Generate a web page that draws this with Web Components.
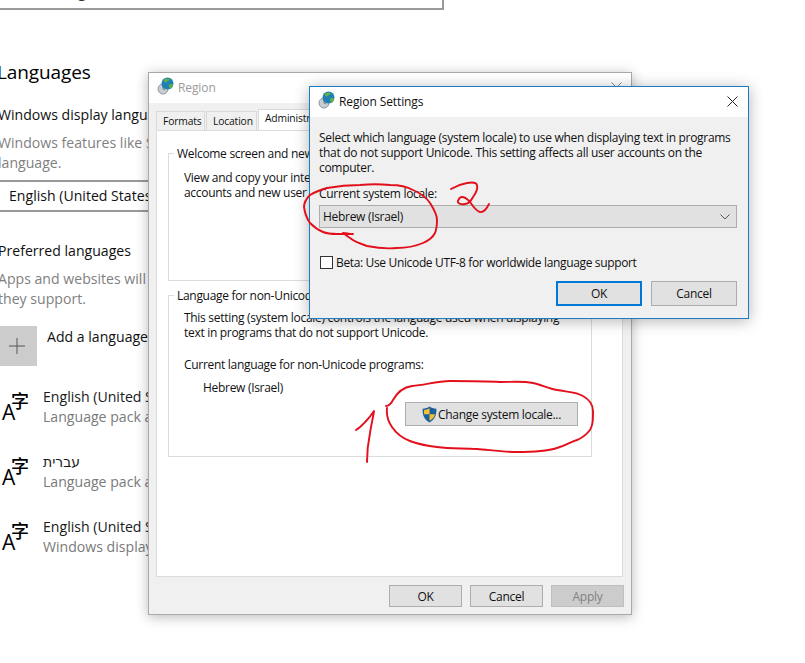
<!DOCTYPE html>
<html><head><meta charset="utf-8">
<style>
html,body{margin:0;padding:0;background:#fff}
body{width:805px;height:663px;overflow:hidden;position:relative;font-family:"Open Sans","Noto Sans",sans-serif;color:#000}
</style></head><body>
<settings-page></settings-page>
<region-window></region-window>
<locale-dialog></locale-dialog>
<red-scribbles></red-scribbles>
<script>
const FONT='"Open Sans","Noto Sans",sans-serif';
const GLOBE=`<svg width="18" height="18" viewBox="0 0 18 18"><circle cx="6" cy="12" r="5" fill="#c9ced3" stroke="#8f979e" stroke-width="1"/><path d="M6 9v3l2 1" fill="none" stroke="#6d757c"/><circle cx="10.5" cy="6.5" r="6" fill="#1f7fb6"/><path d="M7 2.5c2-1.6 5-1.4 6 .3-.6 1-2.300.9-2.800 2-.4 1-2 .9-2.900.3C6.700 4.400 6.600 3.400 7 2.500zM12 7.500c1.300-.6 3-.5 4 0 0 2-1 3.800-2.500 4.500-1-.8-2-3-1.500-4.500z" fill="#5fae4a"/></svg>`;
const SHIELD=`<svg width="15" height="17" viewBox="0 0 15 17"><path d="M7.500.6C9.500 2 11.700 2.700 14.400 2.800c.3 6-1.500 10.800-6.900 13.600C2.100 13.600.3 8.800.6 2.800 3.300 2.700 5.500 2 7.500.6z" fill="#1c5f9e"/><path d="M7.500 2.300v6H2.100c-.1-1.500-.1-2.700 0-4.200 2-.2 3.700-.8 5.400-1.800z" fill="#f2c230"/><path d="M7.500 8.300h5.400c-.5 2.800-2.200 5-5.400 6.500z" fill="#f2c230"/></svg>`;
const def=(n,html)=>customElements.define(n,class extends HTMLElement{
  constructor(){super();this.attachShadow({mode:'open'}).innerHTML=html;}
});

def('win-button',`<style>
:host{display:inline-flex;align-items:center;justify-content:center;box-sizing:border-box;height:22px;background:#e1e1e1;border:1px solid #adadad;font:12px/15px ${FONT};color:#111;letter-spacing:-.3px;gap:1px}
:host([primary]){border:2px solid #0078d7}
:host([disabled]){background:#ccc;border-color:#bfbfbf;color:#838383}
</style><slot></slot>`);

def('group-box',`<style>
:host{display:block}
fieldset{box-sizing:border-box;margin:0;padding:0 15px;height:100%;border:1px solid #dcdcdc;font:12px/15px ${FONT};color:#111;letter-spacing:-.3px;min-width:0;overflow:hidden}
legend{padding:0 3px;margin-left:-10px;white-space:nowrap;line-height:15px}
</style><fieldset><legend><slot name="title"></slot></legend><slot></slot></fieldset>`);

def('win-title',`<style>
:host{display:flex;align-items:center;box-sizing:border-box;height:30px;flex:none;background:#fff;padding:0 0 2px 8px;gap:3px;font:12px/15px ${FONT};letter-spacing:-.1px}
.x{margin-left:auto;margin-right:var(--x-right,10px);width:11px;height:11px}
.x path{stroke:var(--x-color,#222)}
</style><slot name="icon"></slot><slot></slot><svg class="x" viewBox="0 0 11 11"><path d="M.5.500l10 10M10.500.500l-10 10" stroke-width="1" fill="none"/></svg>`);

def('lang-item',`<style>
:host{display:flex;height:65px;box-sizing:border-box;position:relative;padding-left:43px;white-space:nowrap}
.ic{position:absolute;left:0;top:0;width:32px;height:32px}
.a{position:absolute;left:2px;top:10px;font:500 21px/24px "Open Sans",sans-serif;color:#000}
.z{position:absolute;left:11px;top:0;font:500 18px/20px "Noto Sans CJK SC",sans-serif;color:#000}
.t{font-size:14.100px;line-height:20px;color:#1a1a1a;margin-top:-3px}
.s{font-size:14.100px;line-height:20px;color:#7a7a7a}
</style><div class="ic"><span class="a">A</span><span class="z">字</span></div>
<div><div class="t"><slot name="t"></slot></div><div class="s"><slot name="s"></slot></div></div>`);

def('settings-page',`<style>
:host{display:block;width:447px;font-family:"Open Sans",sans-serif;color:#000;margin-left:-3px;white-space:nowrap}
.top{box-sizing:border-box;height:10px;margin-left:-5px;border:solid #9a9a9a;border-width:0 2px 2px 0;overflow:hidden;padding-left:86px;font-size:15px;line-height:10px;color:#333}
.top span{display:block;margin-top:-14px}
h2{font-size:19px;font-weight:400;line-height:26px;margin:49px 0 0;letter-spacing:-.1px}
.h3{font-size:14.100px;line-height:20px;margin:0;color:#111;padding-left:1px}
.p{font-size:14.100px;line-height:20px;color:#7f7f7f;padding-left:1px}
.dd{box-sizing:border-box;height:32px;border:solid #999;border-width:2px 0;margin-top:7px;padding-left:12px;font-size:14.100px;line-height:28px;width:200px;color:#111}
.add{display:flex;margin-top:17px;gap:10px}
.plus{width:40px;height:40px;background:#ccc;display:flex;align-items:center;justify-content:center}
.addt{font-size:14.100px;line-height:20px;margin-top:1px;color:#111}
.list{margin-top:24px;padding-left:3px}
</style>
<div class="top"><span>g</span></div>
<h2>Languages</h2>
<div class="h3" style="margin-top:20px">Windows display language</div>
<div class="p" style="margin-top:8px">Windows features like Settings and File</div>
<div class="p">language.</div>
<div class="dd">English (United States)</div>
<div class="h3" style="margin-top:29px">Preferred languages</div>
<div class="p" style="margin-top:8px">Apps and websites will appear in the first</div>
<div class="p">they support.</div>
<div class="add"><div class="plus"><svg width="16" height="16" viewBox="0 0 16 16"><path d="M8 0v16M0 8h16" stroke="#555" stroke-width="1"/></svg></div><div class="addt">Add a language</div></div>
<div class="list">
<lang-item><span slot="t">English (United States)</span><span slot="s">Language pack available</span></lang-item>
<lang-item><span slot="t" style="font-family:'DejaVu Sans',sans-serif;font-size:14px">עברית</span><span slot="s">Language pack available</span></lang-item>
<lang-item><span slot="t">English (United States)</span><span slot="s">Windows display language</span></lang-item>
</div>`);

def('region-window',`<style>
:host{position:absolute;left:148px;top:72px;width:484px;height:543px;box-sizing:border-box;background:#f0f0f0;border:1px solid #a9a9a9;box-shadow:0 2px 12px rgba(0,0,0,.28);display:flex;flex-direction:column;font:12px/15px ${FONT};color:#111;letter-spacing:-.3px;white-space:nowrap;--x-color:#888;--x-right:9px}
win-title{color:#9b9b9b}
.tabs{display:flex;align-items:flex-end;height:27px;padding:0 0 0 7px;flex:none}
.tab{box-sizing:border-box;height:19px;line-height:18px;background:#f0f0f0;border:1px solid #d9d9d9;border-bottom:0;padding:0 0 0 6px;margin-right:1px;color:#111;font-size:10.300px;letter-spacing:-.15px;overflow:hidden}
.tab.on{height:21px;line-height:17px;background:#fff;width:80px}
.panel{box-sizing:border-box;flex:none;margin-left:7px;width:467px;height:447px;background:#fff;border:1px solid #dcdcdc;padding:15px 30px 0 11px;display:flex;flex-direction:column;gap:7px}
.g1{height:135px}.g2{height:169px}
.body{display:block;padding-top:9px}
.btns{display:flex;gap:8px;margin:8px 0 0 240px;flex:none}
.btns win-button{width:73px}
.loc{display:flex;justify-content:flex-end;margin-top:7px}
.loc win-button{width:173px;height:24px;margin-right:-2px}
</style>
<win-title><span slot="icon">${GLOBE}</span>Region</win-title>
<div class="tabs"><div class="tab" style="width:49px">Formats</div><div class="tab" style="width:51px">Location</div><div class="tab on">Administrative</div></div>
<div class="panel">
<group-box class="g1"><span slot="title">Welcome screen and new user accounts</span>
<div class="body">View and copy your international settings to the<br>accounts and new user accounts.</div></group-box>
<group-box class="g2"><span slot="title">Language for non-Unicode programs</span>
<div class="body" style="padding-top:7px">This setting (system locale) controls the language used when displaying<br>text in programs that do not support Unicode.</div>
<div style="margin-top:17px">Current language for non-Unicode programs:</div>
<div style="margin:8px 0 0 19px">Hebrew (Israel)</div>
<div class="loc"><win-button>${SHIELD}<span>Change system locale...</span></win-button></div>
</group-box>
</div>
<div class="btns"><win-button>OK</win-button><win-button>Cancel</win-button><win-button disabled>Apply</win-button></div>`);

def('locale-dialog',`<style>
:host{position:absolute;left:309px;top:86px;width:440px;height:233px;box-sizing:border-box;background:#f0f0f0;border:1px solid #1a7dc4;box-shadow:0 2px 14px rgba(0,0,0,.3);display:flex;flex-direction:column;font:12px/15px ${FONT};color:#111;letter-spacing:-.3px;white-space:nowrap}
win-title{color:#111}
.c{padding:13px 11px 0 9px}
.sel{box-sizing:border-box;height:23px;background:#e1e1e1;border:1px solid #adadad;margin-top:4px;padding:0 6px 0 3px;display:flex;align-items:center;justify-content:space-between}
.chk{display:flex;align-items:center;gap:3px;margin-top:27px;padding-left:1px;letter-spacing:-.35px}
.box{box-sizing:border-box;width:13px;height:13px;background:#fff;border:1px solid #333}
.btns{display:flex;justify-content:flex-end;gap:9px;margin-top:11px}
.btns win-button{width:86px;height:25px}
</style>
<win-title><span slot="icon">${GLOBE}</span>Region Settings</win-title>
<div class="c">
<div>Select which language (system locale) to use when displaying text in programs<br>that do not support Unicode. This setting affects all user accounts on the<br>computer.</div>
<div style="margin-top:11px">Current system locale:</div>
<div class="sel"><span>Hebrew (Israel)</span><svg width="10" height="6" viewBox="0 0 10 6"><path d="M.5.500L5 5 9.500.500" fill="none" stroke="#555"/></svg></div>
<div class="chk"><span class="box"></span>Beta: Use Unicode UTF-8 for worldwide language support</div>
<div class="btns"><win-button primary>OK</win-button><win-button>Cancel</win-button></div>
</div>`);

def('red-scribbles',`<style>
:host{position:absolute;left:0;top:0;width:805px;height:663px;pointer-events:none}
svg{display:block}path{fill:none;stroke:#e3101c;stroke-width:1.900;stroke-linecap:round;stroke-linejoin:round}
</style><svg width="805" height="663" viewBox="0 0 805 663">
<path d="M386 406C389 406 391 404 393 400 398 391 405 387 412 386 425 385 437 381 450 381 467 381 484 381 500 382 513 382 523 381 533 383 542 385 549 389 557 390 568 392 577 392 583 396 590 400 593 404 593 411 593 420 593 425 590 430 586 435 582 438 577 440 570 442 565 446 557 448 544 452 530 452 517 452 503 452 490 450 477 449 463 448 451 449 437 447 428 446 418 444 410 441 402 438 396 433 392 427 388 421 386 416 387 408"/>
<path d="M356 430C361 427 364 423 367 420 370 417 372 414 374 411 373 418 371 426 370 433 368 443 367 452 367 462"/>
<path d="M353 234C349 234 346 233 343 233 346 235 348 237 350 238 355 242 361 244 367 246 377 248 387 249 397 248 407 248 416 246 423 243 430 240 433 237 435 233 437 228 437 224 437 220 437 214 433 208 430 203 426 197 420 193 413 190 406 186 398 185 390 185 380 184 370 184 360 185 349 185 338 186 327 188 320 190 315 192 310 195 306 199 304 203 304 207 305 214 307 219 310 223 314 227 318 230 323 232 328 234 332 234 337 234 342 234 348 234 353 234"/>
<path d="M451 189C456 186 461 184 467 183 472 182 476 182 477 185 478 189 476 193 473 197 471 201 468 204 465 204 461 205 457 203 458 201 459 198 460 197 462 197 466 197 468 200 470 202 473 206 476 211 480 212 484 213 487 208 489 204"/>
</svg>`);
</script>
</body></html>
